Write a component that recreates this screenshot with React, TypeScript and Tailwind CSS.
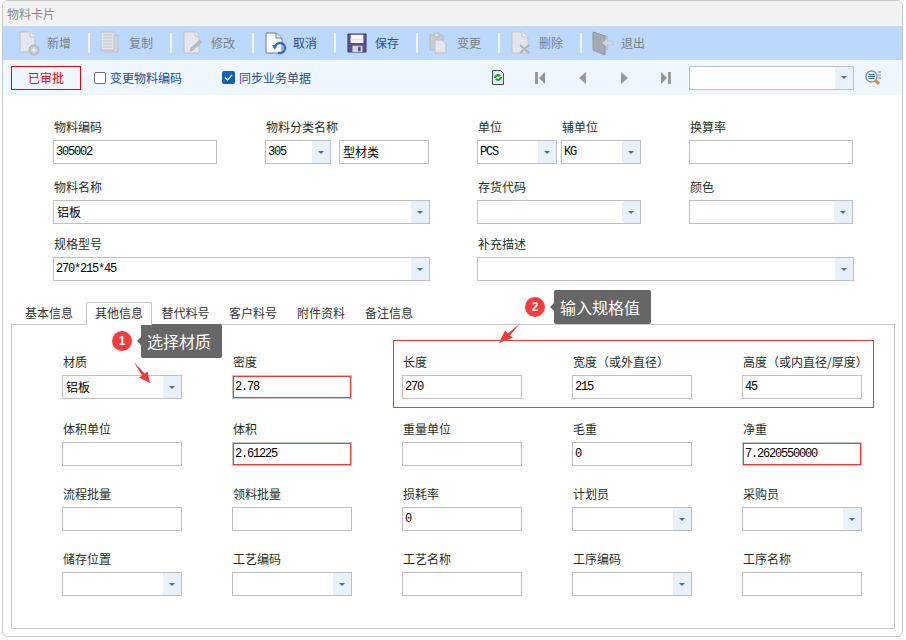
import React from "react";

const font = { fontFamily: '"Noto Sans CJK SC", sans-serif' };

function Caret() {
  return (
    <svg width="6" height="3" viewBox="0 0 6 3">
      <path d="M0 0h6L3 3z" fill="#4a6fa8" />
    </svg>
  );
}

function Input({ value, red, w = "w-full", mono = true }: { value?: string; red?: boolean; w?: string; mono?: boolean }) {
  return (
    <div
      className={`h-6 ${w} border bg-white flex items-center text-black ${
        red ? "border-[#c4c4c4] shadow-[inset_0_0_0_1px_#f03a3a]" : "border-[#bfbfbf]"
      } ${mono ? "pl-[2px] font-['Liberation_Mono'] tracking-[-1.2px] text-[12px]" : "pl-[3px] text-[12px]"}`}
    >
      {value}
    </div>
  );
}

function Combo({ value, w = "w-full", mono = true }: { value?: string; w?: string; mono?: boolean }) {
  return (
    <div className={`h-6 ${w} border border-[#bfbfbf] bg-white flex items-center`}>
      <div
        className={`flex-1 text-black ${
          mono ? "pl-[2px] font-['Liberation_Mono'] tracking-[-1.2px] text-[12px]" : "pl-[3px] text-[12px]"
        }`}
      >
        {value}
      </div>
      <div className="w-[18px] h-full bg-[#e8f0fa] flex items-center justify-center">
        <Caret />
      </div>
    </div>
  );
}

function Label({ children }: { children: React.ReactNode }) {
  return <div className="h-[16px] leading-[16px] text-[12px] text-[#24301f] pl-[1px] mb-[5px] whitespace-nowrap">{children}</div>;
}

function IconNew() {
  return (
    <svg width="24" height="26" viewBox="0 0 24 26">
      <path d="M3 2h10l5 5v15H3z" fill="#e4e8ee" stroke="#bcc2ca" />
      <path d="M13 2v5h5" fill="#f6f7f9" stroke="#bcc2ca" />
      <circle cx="17" cy="20" r="5" fill="#c4c8cc" stroke="#a9adb2" />
      <path d="M17 17.5v5M14.5 20h5" stroke="#eef0f2" strokeWidth="1.4" />
    </svg>
  );
}
function IconCopy() {
  return (
    <svg width="24" height="26" viewBox="0 0 24 26">
      <path d="M6 5h13v17H6z" fill="#d0d4da" stroke="#bcc2ca" />
      <path d="M2 2h13v18H2z" fill="#e0e4e8" stroke="#bcc2ca" />
      <path d="M4 5h9M4 8h9M4 11h9M4 14h9M4 17h9" stroke="#c0c4ca" />
    </svg>
  );
}
function IconEdit() {
  return (
    <svg width="24" height="26" viewBox="0 0 24 26">
      <path d="M3 2h11l4 4v17H3z" fill="#e4e8ee" stroke="#bcc2ca" />
      <path d="M14 2v4h4" fill="#f6f7f9" stroke="#bcc2ca" />
      <path d="M9 21l1-3 9-8 2 2-9 8z" fill="#b8bcc2" stroke="#a4a8ae" strokeWidth="0.6" />
    </svg>
  );
}
function IconCancel() {
  return (
    <svg width="24" height="26" viewBox="0 0 24 26">
      <path d="M3 3h10l6 5v15H3z" fill="#fbfcfe" stroke="#6d7d96" />
      <path d="M13 3v5h6" fill="#dfe6f0" stroke="#6d7d96" />
      <path d="M12 18a5 5 0 1 1 5 5h-2" fill="none" stroke="#2b6fc4" strokeWidth="2.4" />
      <path d="M9 15l5 0-2 5z" fill="#2b6fc4" />
    </svg>
  );
}
function IconSave() {
  return (
    <svg width="20" height="20" viewBox="0 0 22 22">
      <path d="M1 1h20v20H1z" fill="#5a4f96" stroke="#3f3a78" />
      <path d="M4 2h14v9H4z" fill="#f7f7f7" />
      <path d="M4 7h14v1H4z" fill="#d8d8e4" />
      <path d="M6 14h11v7H6z" fill="#d6d6dc" />
      <path d="M12 15h3v5h-3z" fill="#5a4f96" />
    </svg>
  );
}
function IconChange() {
  return (
    <svg width="24" height="26" viewBox="0 0 24 26">
      <path d="M3 5h13v15H3z" fill="#c9ccd2" stroke="#b6bac0" />
      <path d="M7 3h5v4H7z" fill="#dcdfe3" stroke="#b6bac0" />
      <path d="M8 10h7l4 4v9H8z" fill="#e4e7ec" stroke="#bcc0c6" />
    </svg>
  );
}
function IconDelete() {
  return (
    <svg width="24" height="26" viewBox="0 0 24 26">
      <path d="M3 2h10l6 5v16H3z" fill="#e2e6ec" stroke="#c2c7ce" />
      <path d="M13 2v5h6" fill="#f3f4f6" stroke="#c2c7ce" />
      <path d="M11 15l9 8M20 15l-9 8" stroke="#b0b4ba" strokeWidth="2" />
    </svg>
  );
}
function IconExit() {
  return (
    <svg width="24" height="26" viewBox="0 0 24 26">
      <path d="M2 2l12 4v19L2 20z" fill="#a4aab2" stroke="#90969e" />
      <path d="M14 6h2v3M16 17v3h-2" fill="none" stroke="#a8aeb6" />
      <path d="M11 13l5-4v2h6v4h-6v2z" fill="#d4d8dc" stroke="#b4b8be" strokeWidth="0.6" />
    </svg>
  );
}

function ToolButton({ icon, text, active, last }: { icon: React.ReactNode; text: string; active?: boolean; last?: boolean }) {
  return (
    <div className="w-[82px] h-full flex items-center shrink-0 relative">
      <div className="w-[24px] h-[26px] flex items-center justify-center">{icon}</div>
      <span className={`ml-[6px] text-[12px] ${active ? "text-[#1d4f91]" : "text-[#7c7f84]"}`}>{text}</span>
      {!last && <div className="absolute left-[71px] top-[7px] w-[2px] h-[20px] bg-[#f0f7ff]" />}
    </div>
  );
}

function NavFirst() {
  return (
    <svg width="11" height="12" viewBox="0 0 11 12">
      <path d="M0 0h3v12H0z" fill="#9a9a9a" />
      <path d="M10 0v12L4 6z" fill="#8f9598" />
    </svg>
  );
}
function NavPrev() {
  return (
    <svg width="7" height="12" viewBox="0 0 7 12">
      <path d="M7 0v12L0 6z" fill="#969a9c" />
    </svg>
  );
}
function NavNext() {
  return (
    <svg width="7" height="12" viewBox="0 0 7 12">
      <path d="M0 0v12l7-6z" fill="#969a9c" />
    </svg>
  );
}
function NavLast() {
  return (
    <svg width="11" height="12" viewBox="0 0 11 12">
      <path d="M0 0v12l6-6z" fill="#8f9598" />
      <path d="M7 0h3v12H7z" fill="#9a9a9a" />
    </svg>
  );
}

function Tip({ num, text, className }: { num: string; text: string; className: string }) {
  return (
    <div className={`absolute flex items-center ${className}`}>
      <div className="w-5 h-5 rounded-full bg-[#f73b3b] text-white text-[12px] flex items-center justify-center font-['Liberation_Sans'] font-bold">
        {num}
      </div>
      <div className="ml-[5px] w-0 h-0 border-y-[4px] border-y-transparent border-r-[4px] border-r-[#666666]" />
      <div className="h-[34px] pl-[6px] pr-[11px] flex items-center rounded-[2px] bg-[#666666] text-white text-[16px]">{text}</div>
    </div>
  );
}

export default function App() {
  return (
    <div className="relative w-[906px] h-[640px] bg-white overflow-hidden" style={font}>
      <div className="ml-[2px] w-[901px] h-[637px] border border-[#c8c8c8] rounded-[6px] overflow-hidden flex flex-col">
        <div className="h-[25px] shrink-0 bg-[#f2f2f2] flex items-center pl-[4px] text-[12px] text-[#8a8a8a]">物料卡片</div>

        <div className="h-[34px] shrink-0 bg-[#bcd8fd] flex items-center pl-[14px]">
          <ToolButton icon={<IconNew />} text="新增" />
          <ToolButton icon={<IconCopy />} text="复制" />
          <ToolButton icon={<IconEdit />} text="修改" />
          <ToolButton icon={<IconCancel />} text="取消" active />
          <ToolButton icon={<IconSave />} text="保存" active />
          <ToolButton icon={<IconChange />} text="变更" />
          <ToolButton icon={<IconDelete />} text="删除" />
          <ToolButton icon={<IconExit />} text="退出" last />
        </div>

        <div className="h-[35px] shrink-0 bg-[#eef6ff] flex items-center pl-[8px]">
          <div className="w-[70px] h-6 border border-[#f00000] flex items-center justify-center text-[12px] text-[#f00000]">已审批</div>
          <div className="ml-[13px] w-[12px] h-[12px] rounded-[2px] border border-[#707070] bg-white" />
          <span className="ml-[4px] text-[12px] text-[#1d4f91] w-[112px]">变更物料编码</span>
          <div className="w-[13px] h-[13px] rounded-[2px] bg-[#0f62b8] flex items-center justify-center">
            <svg width="9" height="7" viewBox="0 0 9 7">
              <path d="M1 3.5L3.5 6L8 1" fill="none" stroke="#ffffff" strokeWidth="1.2" />
            </svg>
          </div>
          <span className="ml-[4px] text-[12px] text-[#1d4f91] w-[72px]">同步业务单据</span>
          <svg className="ml-[181px]" width="12" height="15" viewBox="0 0 12 15">
            <path d="M.5.5h8l3 3v11H.5z" fill="#eef0fa" stroke="#3f4f8f" />
            <path d="M3 8a3 3 0 0 1 5-2M9 7a3 3 0 0 1-5 2" fill="none" stroke="#18a018" strokeWidth="2.2" />
          </svg>
          <div className="ml-[31px] flex items-center">
            <NavFirst />
            <div className="ml-[33px]"><NavPrev /></div>
            <div className="ml-[35px]"><NavNext /></div>
            <div className="ml-[33px]"><NavLast /></div>
          </div>
          <div className="ml-[17px]">
            <Combo w="w-[165px]" />
          </div>
          <svg className="ml-[11px]" width="17" height="16" viewBox="0 0 17 16">
            <circle cx="6.5" cy="6.5" r="5.5" fill="#eef2f8" stroke="#8a94a4" strokeWidth="1.4" />
            <path d="M3.5 4.5h6M3 6.5h7M3.5 8.5h6" stroke="#2f5fb0" />
            <path d="M13 2h3M13 5h3M13 8h3" stroke="#5a7fb8" />
            <path d="M10 10l4 4" stroke="#e58a1f" strokeWidth="3" />
          </svg>
        </div>

        <div className="grid grid-cols-[212px_212px_84px_128px_165px] gap-y-[15px] pl-[50px] pt-[24px] shrink-0">
          <div>
            <Label>物料编码</Label>
            <Input value="305002" w="w-[164px]" />
          </div>
          <div>
            <Label>物料分类名称</Label>
            <div className="flex gap-[8px] w-[164px]">
              <Combo value="305" w="w-[66px]" />
              <Input value="型材类" w="w-[90px]" mono={false} />
            </div>
          </div>
          <div>
            <Label>单位</Label>
            <Combo value="PCS" w="w-[80px]" />
          </div>
          <div>
            <Label>辅单位</Label>
            <Combo value="KG" w="w-[80px]" />
          </div>
          <div>
            <Label>换算率</Label>
            <Input w="w-[164px]" />
          </div>

          <div className="col-span-2">
            <Label>物料名称</Label>
            <Combo value="铝板" w="w-[377px]" mono={false} />
          </div>
          <div className="col-span-2">
            <Label>存货代码</Label>
            <Combo w="w-[164px]" />
          </div>
          <div>
            <Label>颜色</Label>
            <Combo w="w-[164px]" />
          </div>

          <div className="col-span-2 -mt-[3px]">
            <Label>规格型号</Label>
            <Combo value="270*215*45" w="w-[377px]" />
          </div>
          <div className="col-span-3 -mt-[3px]">
            <Label>补充描述</Label>
            <Combo w="w-[377px]" />
          </div>
        </div>

        <div className="mt-[21px] pl-[9px] h-[23px] flex items-end shrink-0 relative z-10 text-[12px] text-[#333333]">
          <div className="w-[74px] h-[23px] pb-[2px] flex items-center justify-center">基本信息</div>
          <div className="w-[66px] h-[23px] pb-[2px] flex items-center justify-center border border-b-0 border-[#c4c4c4] bg-white rounded-t-[2px]">其他信息</div>
          <div className="w-[67px] h-[23px] pb-[2px] flex items-center justify-center">替代料号</div>
          <div className="w-[68px] h-[23px] pb-[2px] flex items-center justify-center">客户料号</div>
          <div className="w-[68px] h-[23px] pb-[2px] flex items-center justify-center">附件资料</div>
          <div className="w-[68px] h-[23px] pb-[2px] flex items-center justify-center">备注信息</div>
        </div>

        <div className="-mt-[1px] ml-[8px] w-[884px] h-[305px] border border-[#c8c8c8] shrink-0 grid grid-cols-[repeat(5,170px)] auto-rows-[65px] pl-[50px] pt-[29px]">
          <div><Label>材质</Label><Combo value="铝板" w="w-[120px]" mono={false} /></div>
          <div><Label>密度</Label><Input value="2.78" red w="w-[120px]" /></div>
          <div><Label>长度</Label><Input value="270" w="w-[120px]" /></div>
          <div><Label>宽度（或外直径）</Label><Input value="215" w="w-[120px]" /></div>
          <div><Label>高度（或内直径/厚度）</Label><Input value="45" w="w-[120px]" /></div>

          <div className="mt-[2px]"><Label>体积单位</Label><Input w="w-[120px]" /></div>
          <div className="mt-[2px]"><Label>体积</Label><Input value="2.61225" red w="w-[120px]" /></div>
          <div className="mt-[2px]"><Label>重量单位</Label><Input w="w-[120px]" /></div>
          <div className="mt-[2px]"><Label>毛重</Label><Input value="0" w="w-[120px]" /></div>
          <div className="mt-[2px]"><Label>净重</Label><Input value="7.2620550000" red w="w-[120px]" /></div>

          <div className="mt-[2px]"><Label>流程批量</Label><Input w="w-[120px]" /></div>
          <div className="mt-[2px]"><Label>领料批量</Label><Input w="w-[120px]" /></div>
          <div className="mt-[2px]"><Label>损耗率</Label><Input value="0" w="w-[120px]" /></div>
          <div className="mt-[2px]"><Label>计划员</Label><Combo w="w-[120px]" /></div>
          <div className="mt-[2px]"><Label>采购员</Label><Combo w="w-[120px]" /></div>

          <div className="mt-[2px]"><Label>储存位置</Label><Combo w="w-[120px]" /></div>
          <div className="mt-[2px]"><Label>工艺编码</Label><Combo w="w-[120px]" /></div>
          <div className="mt-[2px]"><Label>工艺名称</Label><Input w="w-[120px]" /></div>
          <div className="mt-[2px]"><Label>工序编码</Label><Combo w="w-[120px]" /></div>
          <div className="mt-[2px]"><Label>工序名称</Label><Input w="w-[120px]" /></div>
        </div>
      </div>

      {/* annotations over the form */}
      <div className="absolute left-[393px] top-[340px] w-[481px] h-[68px] border border-[#f03a3a]" />
      <Tip num="1" text="选择材质" className="left-[112px] top-[324px]" />
      <Tip num="2" text="输入规格值" className="left-[525px] top-[290px]" />
      <svg className="absolute left-0 top-0 pointer-events-none" width="906" height="640">
        <path d="M150 383L139 377.5L142 375.5L134 362L144.5 373.5L147.5 371.5z" fill="#f03a3a" />
        <path d="M499 343L513 337.5L510 335.5L520 323.5L508 333.5L505 330.5z" fill="#f03a3a" />
      </svg>
    </div>
  );
}
